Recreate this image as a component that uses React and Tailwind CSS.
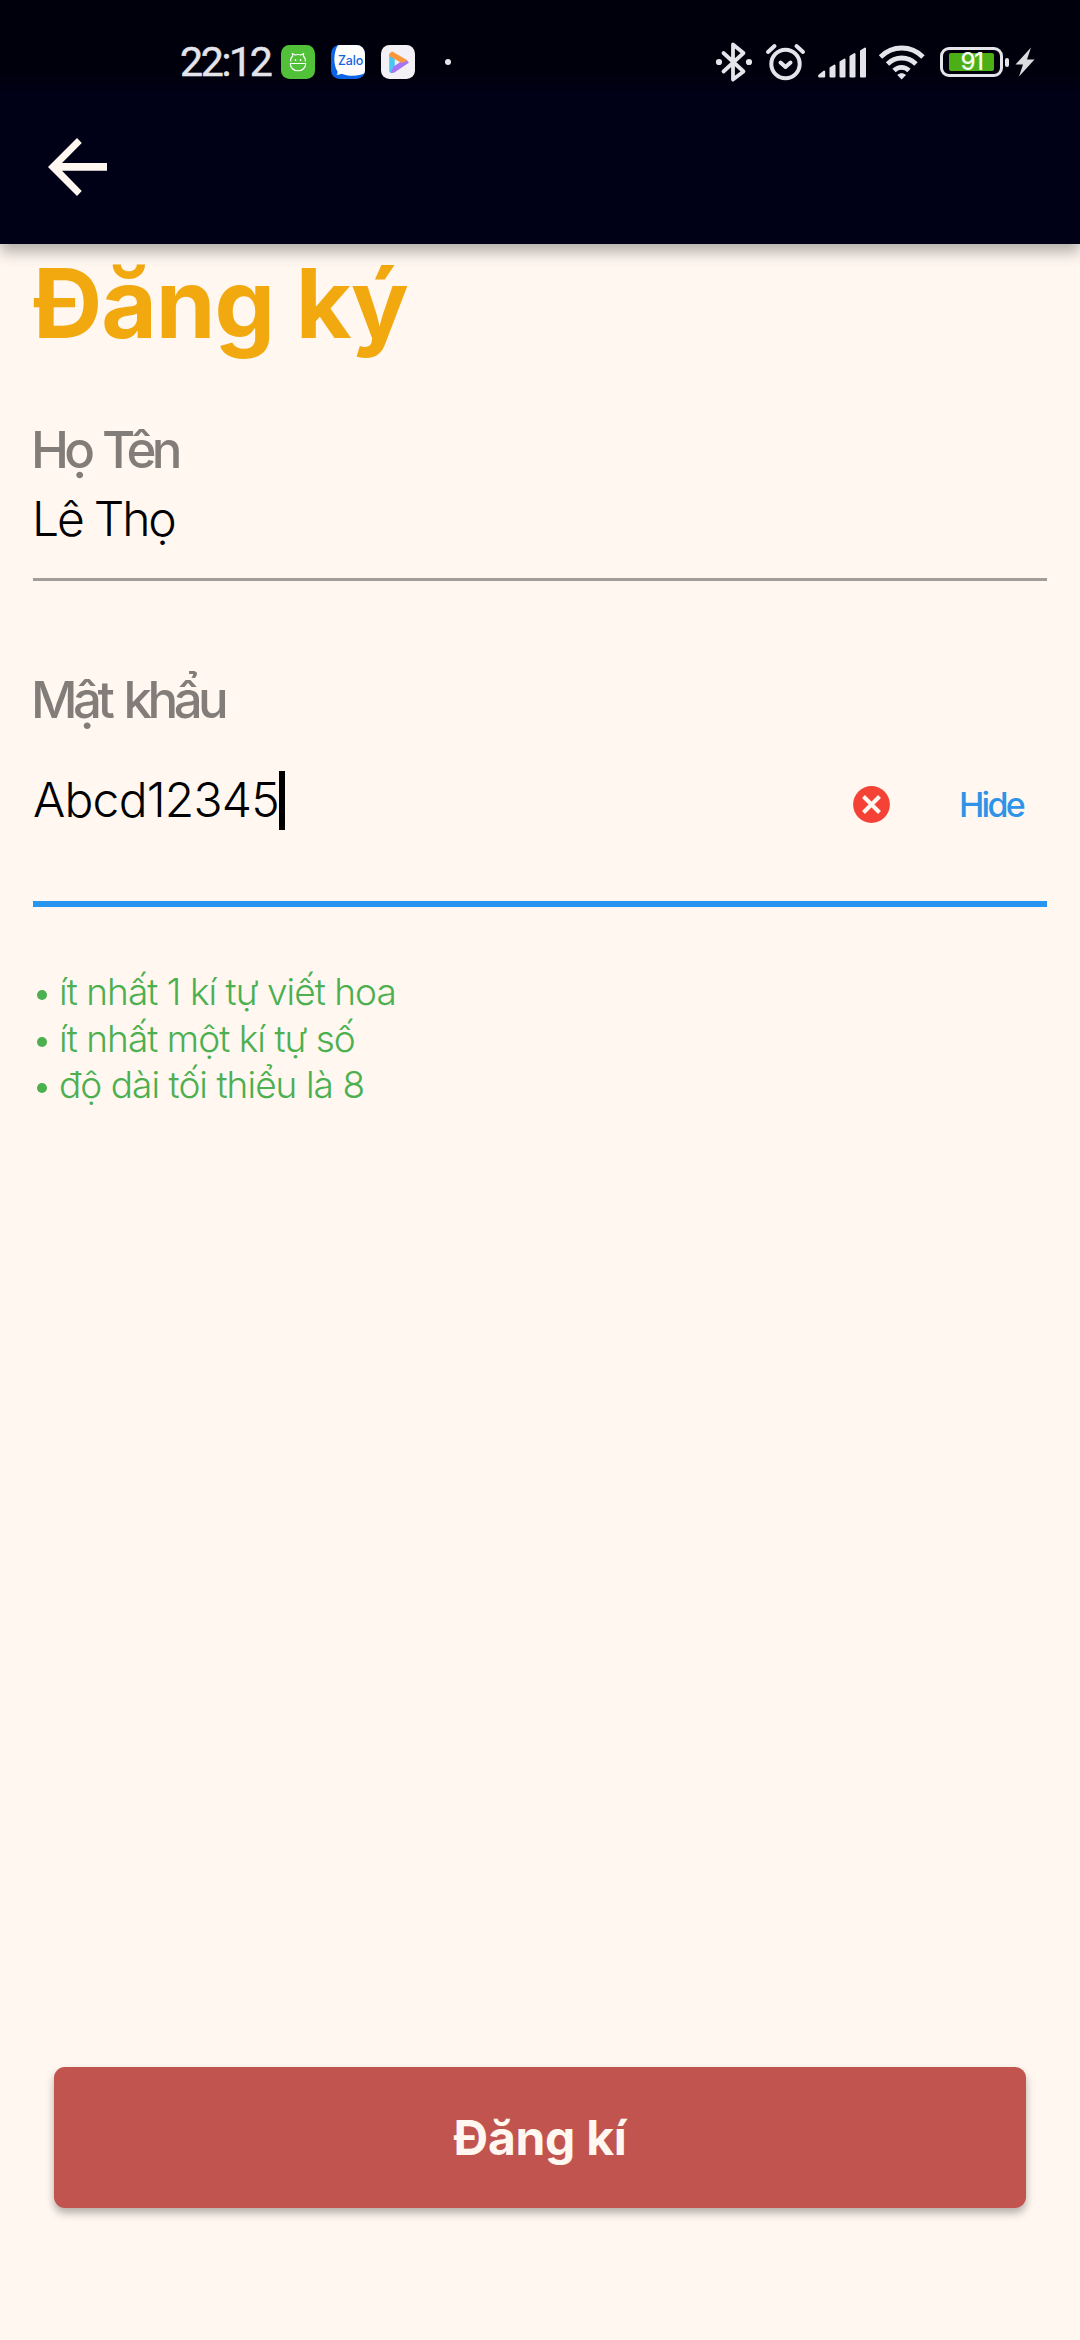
import React from "react";

function AndroidAppIcon() {
  return (
    <svg className="h-[34px] w-[34px]" viewBox="281 45 34 34">
      <rect x="281" y="45" width="34" height="34" rx="8.5" fill="#52c13a" />
      <g fill="none" stroke="#fff" strokeWidth="1.1" strokeLinejoin="round">
        <path d="M290.300 63.500h15.400c0 4.300-3.300 7.300-7.700 7.300s-7.700-3-7.700-7.300z" />
        <path d="M290.800 61.500c-.5-2.500.8-4.500 1.900-5.500l-.4-2.500 2.700 1.500c2-.6 4-.6 6 0l2.700-1.500-.4 2.500c1.100 1 2.400 3 1.900 5.500" />
      </g>
      <circle cx="295.500" cy="60" r=".9" fill="#fff" />
      <circle cx="300.500" cy="60" r=".9" fill="#fff" />
    </svg>
  );
}

function ZaloIcon() {
  return (
    <div className="relative h-[34px] w-[34px] overflow-hidden rounded-[8.500px]">
      <svg className="h-[34px] w-[34px]" viewBox="0 0 34 34">
        <rect width="34" height="34" fill="#0b63e5" />
        <path d="M7 0C3 6 1.500 19 6.500 26.500c.3 1.500-.2 2.300-1 3.300 2 .2 3.300-.2 4.800-1.100C17 31.500 28 31.500 34 28V0z" fill="#fff" />
      </svg>
      <span className="absolute top-[8px] left-[7px] font-['Inter'] text-[12.500px] leading-[16px] font-medium tracking-[-0.200px] text-[#1465dc]">Zalo</span>
    </div>
  );
}

function PlayIcon() {
  return (
    <svg className="h-[34px] w-[34px]" viewBox="0 0 34 34">
      <rect width="34" height="34" rx="8.500" fill="#f3f1f6" />
      <g strokeWidth="1.500" strokeLinejoin="round">
        <path d="M9 10l4 2.500V22l-2.300 5.500L9 26.500z" fill="#45c8f5" stroke="#45c8f5" />
        <path d="M20.500 17l4.500-1.500 2 2L13 27l-2.300.3L13 22z" fill="#a774f5" stroke="#a774f5" />
        <path d="M9 9l2-1.800L25 15.500 20.500 17 9 10.500z" fill="#f9973c" stroke="#f9973c" />
      </g>
    </svg>
  );
}

function BluetoothIcon() {
  return (
    <svg className="h-11 w-[42px]" viewBox="712 40 42 44" fill="none" stroke="#e4e4ea" strokeWidth="3.800" strokeLinejoin="round" strokeLinecap="round">
      <path d="M722.500 53l20 18.500-10.500 8V44.500l10.500 8.500L722.500 71.500" />
      <circle cx="718" cy="62" r="3.100" fill="#e4e4ea" stroke="none" />
      <circle cx="748" cy="62" r="3.100" fill="#e4e4ea" stroke="none" />
    </svg>
  );
}

function AlarmIcon() {
  return (
    <svg className="h-11 w-[46px]" viewBox="762 40 46 44" fill="none" stroke="#e4e4ea" strokeWidth="4" strokeLinecap="round" strokeLinejoin="round">
      <circle cx="784.500" cy="64" r="14.200" />
      <path d="M779.500 62.500l5 4.500 5-4.500M767 52l6.500-6M802 52l-6.500-6" />
    </svg>
  );
}

function SignalIcon() {
  return (
    <svg className="h-11 w-[52px]" viewBox="815 40 52 44" fill="#e4e4ea" stroke="#e4e4ea" strokeWidth="2" strokeLinejoin="round">
      <path d="M818.200 76.500v-1l5-4v5zM829.500 76.500V68l4-2.500v11zM839.500 76.500V62l4-2.500v17zM849.500 76.500V56.500l4-2.500v22.500zM860 76.500V51l4-2.500v28z" />
    </svg>
  );
}

function WifiIcon() {
  return (
    <svg className="h-11 w-[50px]" viewBox="876 40 50 44" fill="none" stroke="#e4e4ea" strokeWidth="4.800">
      <path d="M879.500 57c12-12 30.500-12 42.500 0" />
      <path d="M886.500 64c8-8 20.500-8 28.500 0" />
      <path d="M893 70.500c4.400-4.200 10.600-4.200 15 0" />
      <path d="M896.300 75c2.500-2.500 6.200-2.500 8.700 0l-4.350 4.500z" fill="#e4e4ea" stroke="none" />
    </svg>
  );
}

function Battery() {
  return (
    <div className="flex items-center">
      <div className="flex h-[30px] w-[63px] items-center justify-center rounded-[9px] border-[3px] border-[#e4e4ea]">
        <div className="flex h-[18px] w-[45px] items-center justify-center rounded-[2px] bg-[#4caf16]">
          <span className="font-['Inter'] text-[24px] leading-[18px] font-medium tracking-[-1.500px] text-[#f4fbef]">91</span>
        </div>
      </div>
      <div className="ml-[2px] h-[9px] w-[4px] rounded-[2px] bg-[#e4e4ea]" />
      <svg className="ml-[6px] h-[30px] w-[20px]" viewBox="0 0 20 30">
        <path d="M16 0.500L0.500 17.500H8L4 29.500 19.500 12.500H12z" fill="#dcdce0" />
      </svg>
    </div>
  );
}

function StatusBar() {
  return (
    <div className="flex h-[124px] items-center bg-linear-to-b from-[#00000d] from-60% to-[#000016] to-75% pr-[45px] pl-[180px]">
      <span className="w-[101px] font-['Roboto'] text-[41px] leading-[44px] tracking-[-2.300px] text-[#e4e4ea] [-webkit-text-stroke:0.500px_#e4e4ea]">22:12</span>
      <div className="flex items-center gap-4">
        <AndroidAppIcon />
        <ZaloIcon />
        <PlayIcon />
      </div>
      <div className="ml-[30px] h-[6px] w-[6px] rounded-full bg-[#e4e4ea]" />
      <div className="ml-auto flex items-center">
        <BluetoothIcon />
        <div className="ml-2"><AlarmIcon /></div>
        <div className="ml-[7px]"><SignalIcon /></div>
        <div className="ml-[9px]"><WifiIcon /></div>
        <div className="ml-[13px]"><Battery /></div>
      </div>
    </div>
  );
}

function AppBar() {
  return (
    <header className="relative z-10 h-[244px] bg-[#000016] shadow-[0_8px_14px_rgba(0,0,0,0.300)]">
      <StatusBar />
      <button aria-label="Back" className="mt-[13px] ml-[47px] block">
        <svg className="h-[60px] w-[61px]" viewBox="0 0 61 60">
          <path d="M60 26H15L34.800 6 30 1 1 30l29 29 4.800-5L15 33.800H60z" fill="#fff7f0" />
        </svg>
      </button>
    </header>
  );
}

const rules = ["ít nhất 1 kí tự viết hoa", "ít nhất một kí tự số", "độ dài tối thiểu là 8"];

export default function App() {
  return (
    <div className="flex h-[2340px] w-[1080px] flex-col bg-[#fff7f0] font-['Inter',sans-serif]">
      <AppBar />
      <main className="flex flex-col px-[33px] pt-[11px]">
        <h1 className="text-[96px] leading-[96px] font-bold tracking-[-1.100px] text-[#f2a90f]">Đăng ký</h1>

        <label className="mt-[69px] -ml-[2px] text-[51px] leading-[60px] font-medium tracking-[-4.800px] [word-spacing:3px] text-[#827d78]">Họ Tên</label>
        <div className="mt-[9px] -ml-[1px] text-[48px] leading-[60px] font-[270] tracking-[-2.200px] text-black">Lê Thọ</div>
        <div className="mt-[29px] h-[3px] bg-[#a29d98]" />

        <label className="mt-[89px] -ml-[2px] text-[51px] leading-[60px] font-medium tracking-[-4.500px] [word-spacing:4px] text-[#827d78]">Mật khẩu</label>
        <div className="mt-10 flex h-[60px] items-center">
          <span className="text-[48px] leading-[60px] font-[270] tracking-[-0.800px] text-black">Abcd12345</span>
          <span className="h-[59px] w-[6px] bg-black" />
          <svg className="mt-[9px] mr-[69px] ml-auto h-[37px] w-[37px]" viewBox="0 0 37 37">
            <circle cx="18.500" cy="18.500" r="18.400" fill="#f44336" />
            <path d="M10.500 10.500l16 16M26.500 10.500l-16 16" stroke="#fff7f0" strokeWidth="4" />
          </svg>
          <button className="mt-[9px] mr-[24px] text-[34px] leading-[40px] font-medium tracking-[-2.700px] text-[#2f93e8]">Hide</button>
        </div>
        <div className="mt-[71px] h-[6px] bg-[#2796f0]" />

        <ul className="mt-[62px] text-[37px] leading-[46.670px] font-[280] tracking-[-0.950px] text-[#4caf50]">
          {rules.map((rule) => (
            <li key={rule} className="flex items-center">
              <span className="mt-[5px] mr-[12px] ml-[4px] h-[10px] w-[10px] rounded-full bg-[#4caf50]" />
              <span>{rule}</span>
            </li>
          ))}
        </ul>
      </main>

      <button className="mx-[54px] mt-auto mb-[132px] h-[141px] rounded-[11px] bg-[#c1544e] text-[48px] font-bold tracking-[-0.300px] text-[#fff7f0] shadow-[0_5px_8px_rgba(0,0,0,0.300)]">
        Đăng kí
      </button>
    </div>
  );
}
